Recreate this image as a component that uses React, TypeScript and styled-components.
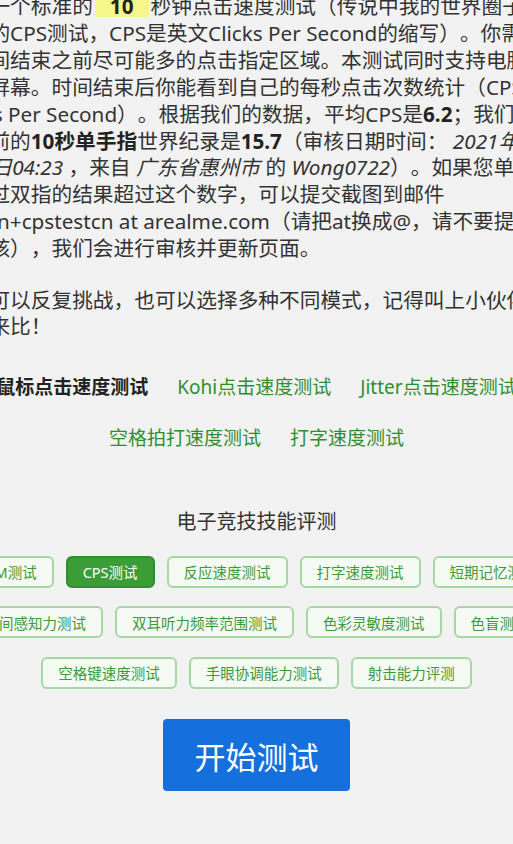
import React from "react";
import styled, { createGlobalStyle } from "styled-components";

interface SkillProps {
  $active?: boolean;
}

interface LinkProps {
  $current?: boolean;
}

const topLinks = [
  { label: "鼠标点击速度测试", current: true },
  { label: "Kohi点击速度测试" },
  { label: "Jitter点击速度测试" },
  { label: "空格拍打速度测试" },
  { label: "打字速度测试" },
];

const skills = [
  "APM测试",
  "CPS测试",
  "反应速度测试",
  "打字速度测试",
  "短期记忆测试",
  "时间感知力测试",
  "双耳听力频率范围测试",
  "色彩灵敏度测试",
  "色盲测试",
  "空格键速度测试",
  "手眼协调能力测试",
  "射击能力评测",
];

const App = () => {
  return (
    <Page lang="zh-CN">
      <GlobalStyle />
      <Article>
        <Paragraph>
          <Line>
            这是一个标准的<Highlight>10</Highlight>
            秒钟点击速度测试（传说中我的世界圈子里
          </Line>
          <Line>流行的CPS测试，CPS是英文Clicks Per Second的缩写）。你需要</Line>
          <Line>在时间结束之前尽可能多的点击指定区域。本测试同时支持电脑和</Line>
          <Line>手机屏幕。时间结束后你能看到自己的每秒点击次数统计（CPS，</Line>
          <Line>
            Clicks Per Second）。根据我们的数据，平均CPS是<b>6.2</b>
            ；我们统计到
          </Line>
          <Line>
            的目前的<b>10秒单手指</b>世界纪录是<b>15.7</b>
            （审核日期时间： <i>2021年12</i>
          </Line>
          <Line>
            <i>月18日04:23</i> ，来自 <i>广东省惠州市</i> 的{" "}
            <i>Wong0722</i>）。如果您单手指
          </Line>
          <Line>或通过双指的结果超过这个数字，可以提交截图到邮件</Line>
          <Line>admin+cpstestcn at arealme.com（请把at换成@，请不要提交无关内容</Line>
          <Line>供审核），我们会进行审核并更新页面。</Line>
        </Paragraph>
        <Paragraph>
          <Line>大家可以反复挑战，也可以选择多种不同模式，记得叫上小伙伴</Line>
          <Line>一起来比！</Line>
        </Paragraph>
      </Article>

      <LinkRow>
        {topLinks.map((link) => (
          <TestLink key={link.label} $current={link.current}>
            {link.label}
          </TestLink>
        ))}
      </LinkRow>

      <SectionTitle>电子竞技技能评测</SectionTitle>

      <SkillGrid>
        {skills.map((skill) => (
          <SkillButton key={skill} $active={skill === "CPS测试"}>
            {skill}
          </SkillButton>
        ))}
      </SkillGrid>

      <StartButton>开始测试</StartButton>
    </Page>
  );
};

const GlobalStyle = createGlobalStyle`
  html, body {
    margin: 0;
    padding: 0;
    background: #f2f2f2;
    overflow: hidden;
  }
  body {
    font-family: "Noto Sans", "Noto Sans CJK SC", sans-serif;
    color: #333;
    text-spacing-trim: space-all;
  }
`;

const Page = styled.main`
  display: flex;
  flex-direction: column;
  align-items: center;
  width: 100%;
  height: 844px;
  overflow: hidden;
`;

// wider than the window on purpose: the reference is a zoomed-in crop
const Article = styled.section`
  flex-shrink: 0;
  width: 617px;
  margin-top: -7px;
`;

const Paragraph = styled.p`
  margin: 0 0 24.5px;
  font-size: 20.7px;
  line-height: 26.9px;
  white-space: nowrap;
  color: #333;
  text-spacing-trim: space-all;

  b {
    font-weight: 700;
    color: #222;
  }

  i {
    font-style: italic;
  }
`;

const Line = styled.span`
  display: block;
`;

const Highlight = styled.b`
  display: inline-block;
  margin: 0 2px;
  padding: 0 15px;
  line-height: 21px;
  background: #f5f78b;
`;

const LinkRow = styled.nav`
  flex-shrink: 0;
  width: 600px;
  margin-top: 9.2px;
  display: flex;
  flex-wrap: wrap;
  justify-content: center;
  column-gap: 29px;
  row-gap: 25px;
`;

const TestLink = styled.a<LinkProps>`
  font-size: 19px;
  line-height: 26px;
  text-decoration: none;
  cursor: pointer;
  font-weight: ${(props) => (props.$current ? 700 : 400)};
  color: ${(props) => (props.$current ? "#222" : "#2e8f2e")};
`;

const SectionTitle = styled.h2`
  flex-shrink: 0;
  margin: 57px 0 0;
  font-size: 20px;
  line-height: 28px;
  font-weight: 400;
  color: #333;
`;

const SkillGrid = styled.div`
  flex-shrink: 0;
  width: 610px;
  margin-top: 19.5px;
  display: flex;
  flex-wrap: wrap;
  justify-content: center;
  gap: 18.5px 12px;
`;

const SkillButton = styled.a<SkillProps>`
  box-sizing: border-box;
  height: 32px;
  padding: 0 15px;
  display: flex;
  align-items: center;
  border-radius: 6px;
  font-size: 14.5px;
  cursor: pointer;
  border: 2px solid ${(props) => (props.$active ? "#2f8f2c" : "#a6d8a3")};
  background: ${(props) => (props.$active ? "#3a9d36" : "#f6faf5")};
  color: ${(props) => (props.$active ? "#fff" : "#3a9a37")};
`;

const StartButton = styled.button`
  flex-shrink: 0;
  margin-top: 30.5px;
  width: 187px;
  height: 72px;
  border: 0;
  border-radius: 4px;
  background: #1570dd;
  color: #fff;
  font-family: inherit;
  font-size: 31px;
  cursor: pointer;
`;

export default App;
